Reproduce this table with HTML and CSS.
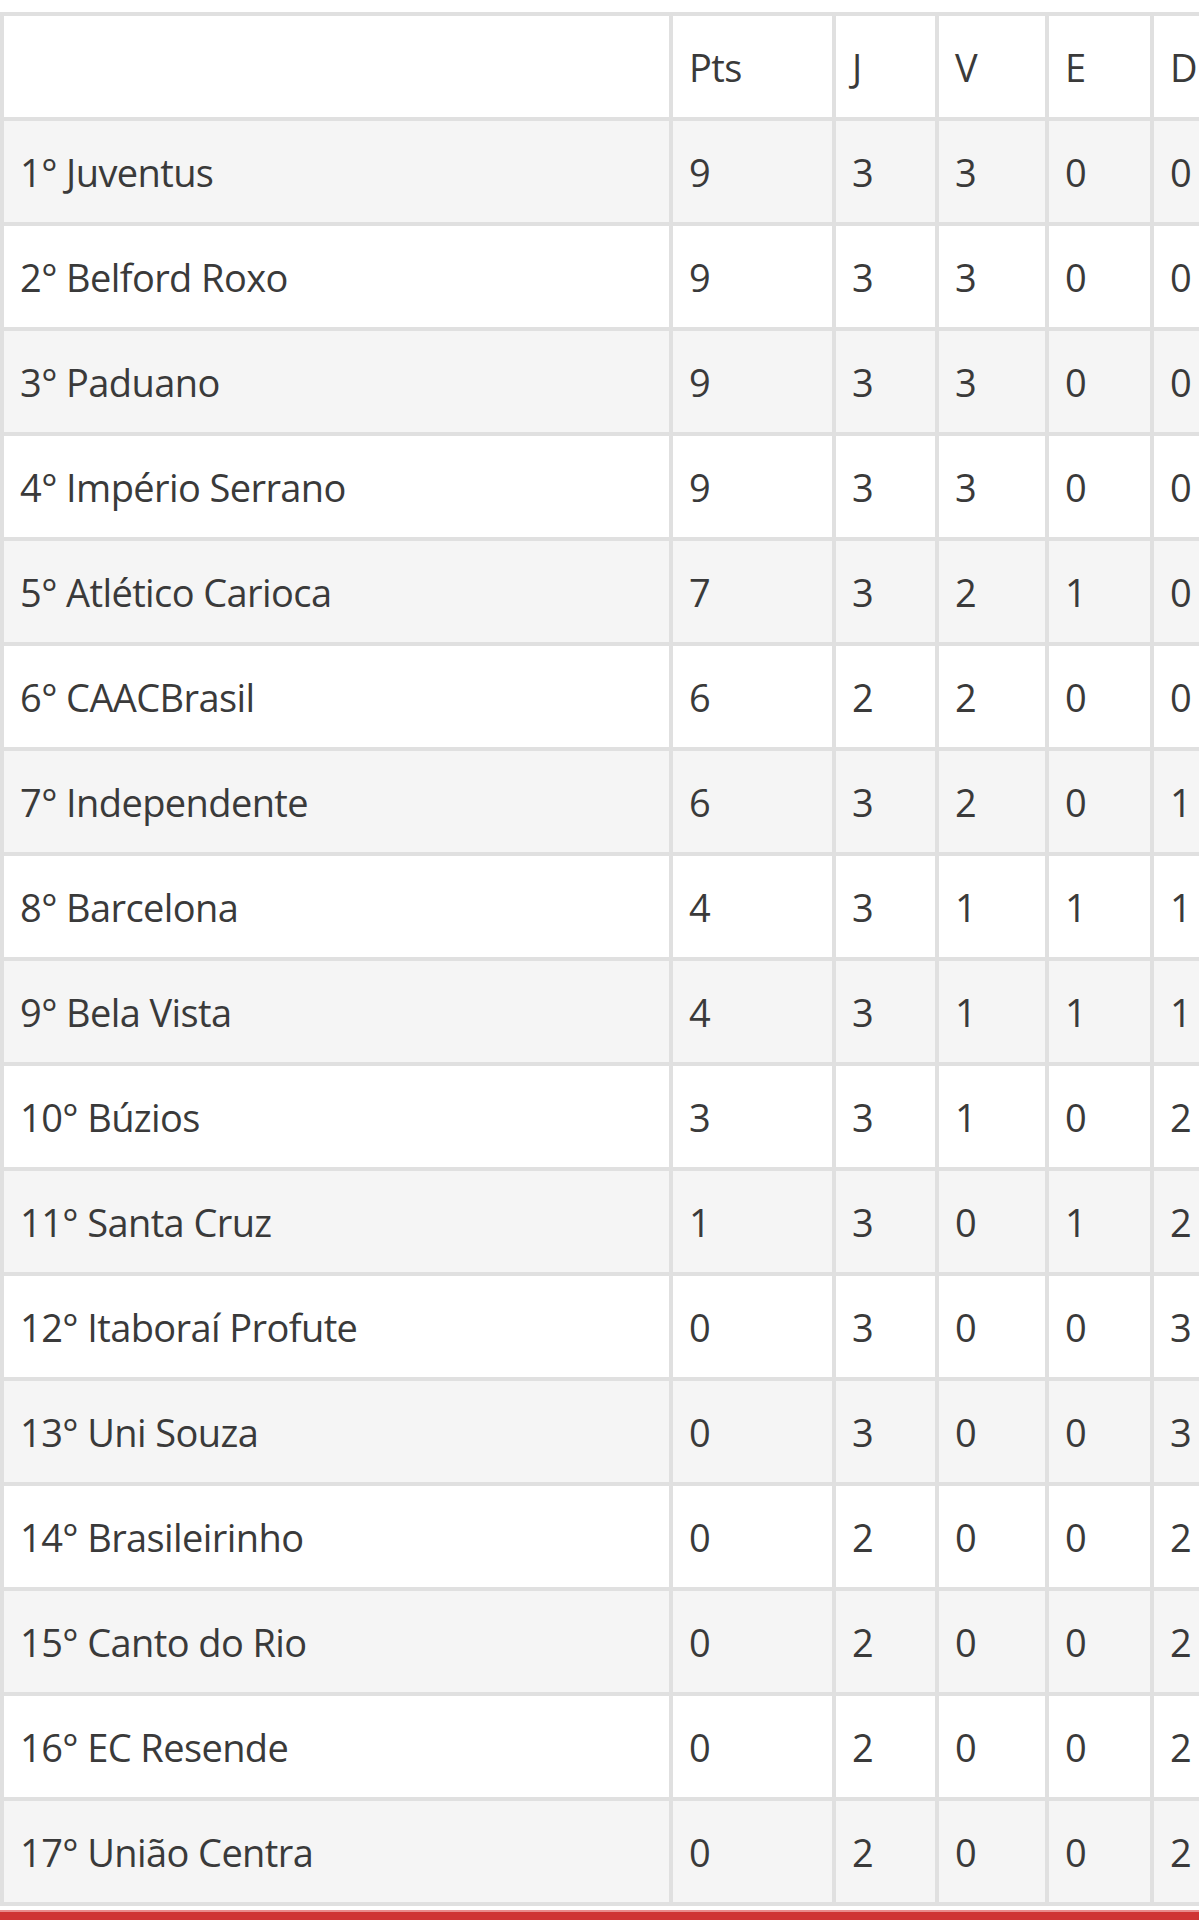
FILE: index.html
```html
<!DOCTYPE html>
<html lang="pt">
<head>
<meta charset="utf-8">
<title>Classificação</title>
<link rel="stylesheet" href="styles.css">
</head>
<body>
<div class="page">
  <div class="top-space"></div>
  <div class="table-wrap">
    <table class="standings">
      <colgroup>
        <col class="c-team"><col class="c-pts"><col class="c-j"><col class="c-v"><col class="c-e"><col class="c-d">
      </colgroup>
      <thead>
        <tr><th></th><th>Pts</th><th>J</th><th>V</th><th>E</th><th>D</th></tr>
      </thead>
      <tbody>
        <tr><td>1° Juventus</td><td>9</td><td>3</td><td>3</td><td>0</td><td>0</td></tr>
        <tr><td>2° Belford Roxo</td><td>9</td><td>3</td><td>3</td><td>0</td><td>0</td></tr>
        <tr><td>3° Paduano</td><td>9</td><td>3</td><td>3</td><td>0</td><td>0</td></tr>
        <tr><td>4° Império Serrano</td><td>9</td><td>3</td><td>3</td><td>0</td><td>0</td></tr>
        <tr><td>5° Atlético Carioca</td><td>7</td><td>3</td><td>2</td><td>1</td><td>0</td></tr>
        <tr><td>6° CAACBrasil</td><td>6</td><td>2</td><td>2</td><td>0</td><td>0</td></tr>
        <tr><td>7° Independente</td><td>6</td><td>3</td><td>2</td><td>0</td><td>1</td></tr>
        <tr><td>8° Barcelona</td><td>4</td><td>3</td><td>1</td><td>1</td><td>1</td></tr>
        <tr><td>9° Bela Vista</td><td>4</td><td>3</td><td>1</td><td>1</td><td>1</td></tr>
        <tr><td>10° Búzios</td><td>3</td><td>3</td><td>1</td><td>0</td><td>2</td></tr>
        <tr><td>11° Santa Cruz</td><td>1</td><td>3</td><td>0</td><td>1</td><td>2</td></tr>
        <tr><td>12° Itaboraí Profute</td><td>0</td><td>3</td><td>0</td><td>0</td><td>3</td></tr>
        <tr><td>13° Uni Souza</td><td>0</td><td>3</td><td>0</td><td>0</td><td>3</td></tr>
        <tr><td>14° Brasileirinho</td><td>0</td><td>2</td><td>0</td><td>0</td><td>2</td></tr>
        <tr><td>15° Canto do Rio</td><td>0</td><td>2</td><td>0</td><td>0</td><td>2</td></tr>
        <tr><td>16° EC Resende</td><td>0</td><td>2</td><td>0</td><td>0</td><td>2</td></tr>
        <tr><td>17° União Centra</td><td>0</td><td>2</td><td>0</td><td>0</td><td>2</td></tr>
      </tbody>
    </table>
  </div>
  <div class="red-bar"></div>
</div>
</body>
</html>
```

FILE: styles.css
```css
html, body {
  margin: 0;
  padding: 0;
  background: #ffffff;
}

.page {
  width: 1199px;
  overflow: hidden;
  font-family: "Open Sans", "Noto Sans", "Liberation Sans", sans-serif;
  color: #3a3a3a;
}

.top-space {
  height: 12px;
}

.table-wrap {
  width: 1199px;
  overflow: hidden;
}

.standings {
  border-collapse: collapse;
  table-layout: fixed;
  width: 1253px;
  font-size: 38px;
  letter-spacing: -0.6px;
}

.c-team { width: 669px; }
.c-pts { width: 163px; }
.c-j { width: 103px; }
.c-v { width: 110px; }
.c-e { width: 105px; }
.c-d { width: 103px; }

.standings th,
.standings td {
  border: 4px solid #e0e0e0;
  padding: 0 0 0 16px;
  height: 101px;
  text-align: left;
  vertical-align: middle;
  font-weight: 400;
  white-space: nowrap;
  overflow: hidden;
}

.standings th {
  height: 101px;
  background: #ffffff;
}

.standings tbody tr:nth-child(odd) td {
  background: #f5f5f5;
}

.standings tbody tr:nth-child(even) td {
  background: #ffffff;
}

.red-bar {
  height: 20px;
  margin-top: 4px;
  background: #cf3434;
  border-top: 2px solid #e88a8a;
}
```
